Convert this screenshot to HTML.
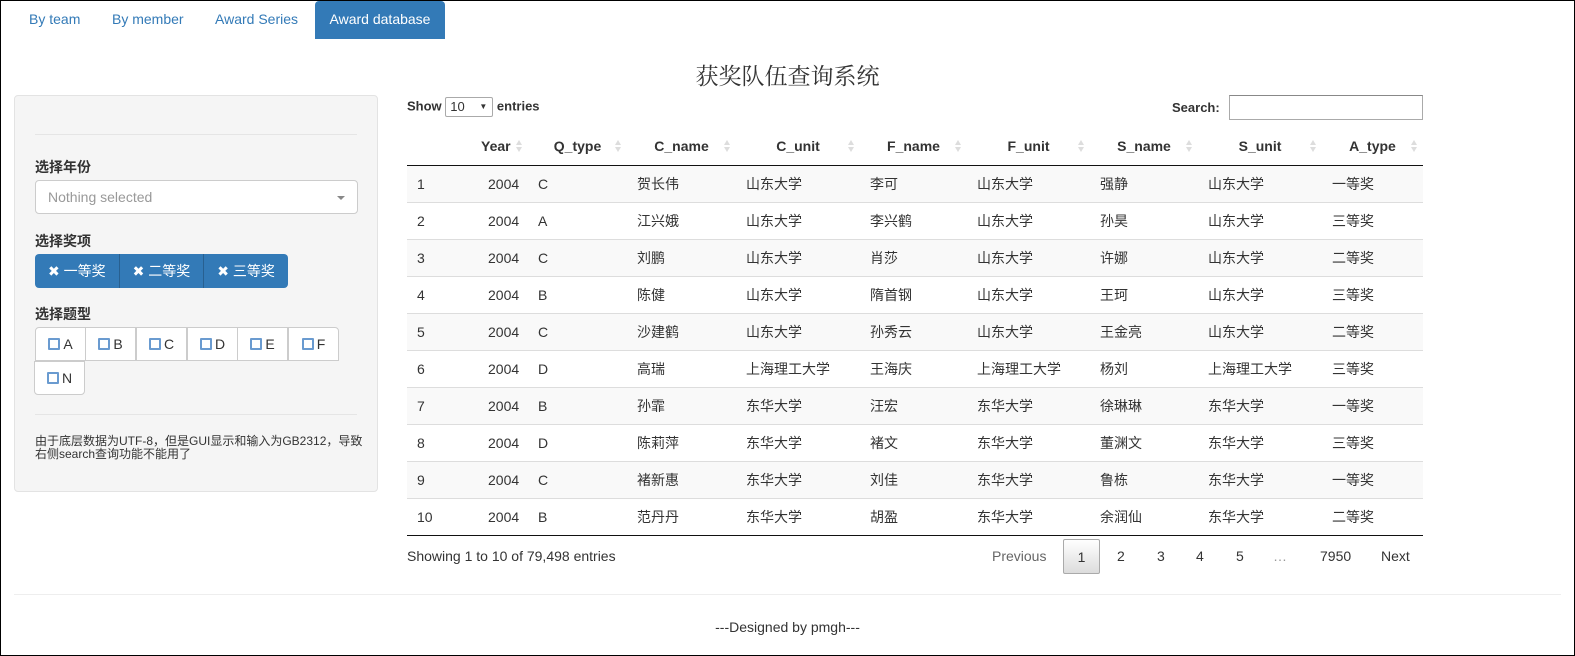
<!DOCTYPE html><html><head><meta charset="utf-8"><style>
*{box-sizing:border-box}
body{margin:0;width:1575px;height:656px;font-family:"Liberation Sans","Noto Sans CJK SC",sans-serif;font-size:14px;color:#333;background:#fff;overflow:hidden}
.frame{position:absolute;left:0;top:0;width:1575px;height:656px;border:1px solid #000}
.nav a{position:absolute;top:1px;height:38px;line-height:36px;color:#337ab7;text-decoration:none;font-size:14px;white-space:nowrap}
.nav .act{background:#337ab7;color:#fff;border-radius:4px 4px 0 0;left:315px;width:130px;text-align:center}
h2{position:absolute;top:58px;left:0;width:1575px;text-align:center;margin:0;font-weight:normal;font-size:23px;font-family:"Noto Serif CJK SC","Liberation Serif",serif;color:#333}
.side{position:absolute;left:14px;top:95px;width:364px;height:397px;background:#f5f5f5;border:1px solid #e3e3e3;border-radius:4px}
.hr{position:absolute;left:20px;right:20px;height:1px;background:#e5e5e5}
.lbl{position:absolute;left:20px;font-weight:bold;font-size:14px}
.sel{position:absolute;left:20px;top:84px;width:323px;height:34px;background:#fff;border:1px solid #ccc;border-radius:4px;color:#999;padding:0 12px;line-height:32px}
.sel:after{content:"";position:absolute;right:12px;top:15px;border:4px solid transparent;border-top-color:#888}
.btns{position:absolute;left:20px;top:158px;height:34px;display:flex}
.btns span{background:#337ab7;color:#fff;height:34px;line-height:34px;padding:0 13px;border-left:1px solid #286090;font-size:14px}
.btns span:first-child{border-radius:4px 0 0 4px;border-left:0}
.btns span:last-child{border-radius:0 4px 4px 0}
.cb{position:absolute;height:34px;width:51px;background:#fff;border:1px solid #ccc;text-align:center;line-height:32px;font-size:14px}
.cb i{display:inline-block;width:12px;height:12px;border:2px solid #6a9bd0;vertical-align:-1px;margin-right:3px;border-radius:1px}
.note{position:absolute;left:20px;top:339px;width:330px;font-size:12px;line-height:13px}
.top{position:absolute;font-weight:bold;font-size:13px}
table{position:absolute;left:407px;top:128px;width:1016px;border-collapse:collapse;table-layout:fixed}
th{height:37px;font-weight:bold;font-size:14px;text-align:center;border-bottom:1px solid #111;position:relative;padding:0}
th:after{content:"";position:absolute;right:6px;top:12px;width:0;height:0;border:3.5px solid transparent;border-bottom:5px solid #ddd;border-top:0}
th:before{content:"";position:absolute;right:6px;top:19px;width:0;height:0;border:3.5px solid transparent;border-top:5px solid #ddd;border-bottom:0}
th.n:after,th.n:before{display:none}
td{height:37px;padding:0 10px;border-top:1px solid #ddd;font-size:14px;white-space:nowrap}
tr:nth-child(odd) td{background:#f9f9f9}
tbody tr:last-child td{border-bottom:1px solid #111}
.pg span{position:absolute;top:539px;height:35px;line-height:35px;font-size:14px}
</style></head><body><div class="frame"></div>
<div class="nav"><a style="left:29px">By team</a><a style="left:112px">By member</a><a style="left:215px">Award Series</a><a class="act">Award database</a></div>
<h2>获奖队伍查询系统</h2>
<div class="side">
<div class="hr" style="top:38px"></div>
<div class="lbl" style="top:61px">选择年份</div>
<div class="sel">Nothing selected</div>
<div class="lbl" style="top:135px">选择奖项</div>
<div class="btns"><span>✖ 一等奖</span><span>✖ 二等奖</span><span>✖ 三等奖</span></div>
<div class="lbl" style="top:208px">选择题型</div>
<div class="cb" style="left:20px;top:231px;border-radius:4px 0 0 0"><i></i>A</div>
<div class="cb" style="left:70px;top:231px"><i></i>B</div>
<div class="cb" style="left:121px;top:231px"><i></i>C</div>
<div class="cb" style="left:172px;top:231px"><i></i>D</div>
<div class="cb" style="left:222px;top:231px"><i></i>E</div>
<div class="cb" style="left:273px;top:231px;border-radius:0 4px 0 0"><i></i>F</div>
<div class="cb" style="left:19px;top:265px;border-radius:0 0 4px 4px"><i></i>N</div>
<div class="hr" style="top:318px"></div>
<div class="note">由于底层数据为UTF-8，但是GUI显示和输入为GB2312，导致右侧search查询功能不能用了</div>
</div>
<div class="top" style="left:407px;top:97px">Show <span style="display:inline-block;width:48px;height:20px;border:1px solid #aaa;border-radius:2px;font-weight:normal;padding-left:4px;line-height:18px;vertical-align:middle;background:#fff;position:relative">10<span style="position:absolute;right:5px;font-size:8px">▼</span></span> entries</div>
<div class="top" style="left:1172px;top:100px">Search:</div>
<div style="position:absolute;left:1229px;top:95px;width:194px;height:25px;border:1px solid #aaa;border-top-color:#888"></div>
<table><colgroup><col style="width:71px"><col style="width:50px"><col style="width:99px"><col style="width:109px"><col style="width:124px"><col style="width:107px"><col style="width:123px"><col style="width:108px"><col style="width:124px"><col style="width:101px"></colgroup>
<thead><tr><th class="n"></th><th style="text-align:left;padding-left:3px">Year</th><th>Q_type</th><th>C_name</th><th>C_unit</th><th>F_name</th><th>F_unit</th><th>S_name</th><th>S_unit</th><th>A_type</th></tr></thead>
<tbody>
<tr><td>1</td><td>2004</td><td>C</td><td>贺长伟</td><td>山东大学</td><td>李可</td><td>山东大学</td><td>强静</td><td>山东大学</td><td>一等奖</td></tr>
<tr><td>2</td><td>2004</td><td>A</td><td>江兴娥</td><td>山东大学</td><td>李兴鹤</td><td>山东大学</td><td>孙昊</td><td>山东大学</td><td>三等奖</td></tr>
<tr><td>3</td><td>2004</td><td>C</td><td>刘鹏</td><td>山东大学</td><td>肖莎</td><td>山东大学</td><td>许娜</td><td>山东大学</td><td>二等奖</td></tr>
<tr><td>4</td><td>2004</td><td>B</td><td>陈健</td><td>山东大学</td><td>隋首钢</td><td>山东大学</td><td>王珂</td><td>山东大学</td><td>三等奖</td></tr>
<tr><td>5</td><td>2004</td><td>C</td><td>沙建鹤</td><td>山东大学</td><td>孙秀云</td><td>山东大学</td><td>王金亮</td><td>山东大学</td><td>二等奖</td></tr>
<tr><td>6</td><td>2004</td><td>D</td><td>高瑞</td><td>上海理工大学</td><td>王海庆</td><td>上海理工大学</td><td>杨刘</td><td>上海理工大学</td><td>三等奖</td></tr>
<tr><td>7</td><td>2004</td><td>B</td><td>孙霏</td><td>东华大学</td><td>汪宏</td><td>东华大学</td><td>徐琳琳</td><td>东华大学</td><td>一等奖</td></tr>
<tr><td>8</td><td>2004</td><td>D</td><td>陈莉萍</td><td>东华大学</td><td>褚文</td><td>东华大学</td><td>董渊文</td><td>东华大学</td><td>三等奖</td></tr>
<tr><td>9</td><td>2004</td><td>C</td><td>褚新惠</td><td>东华大学</td><td>刘佳</td><td>东华大学</td><td>鲁栋</td><td>东华大学</td><td>一等奖</td></tr>
<tr><td>10</td><td>2004</td><td>B</td><td>范丹丹</td><td>东华大学</td><td>胡盈</td><td>东华大学</td><td>余润仙</td><td>东华大学</td><td>二等奖</td></tr>
</tbody></table>
<div style="position:absolute;left:407px;top:548px;font-size:14px">Showing 1 to 10 of 79,498 entries</div>
<div class="pg"><span style="left:992px;color:#666">Previous</span>
<span style="left:1063px;width:37px;text-align:center;border:1px solid #aaa;border-radius:2px;background:linear-gradient(#fff,#dcdcdc)">1</span>
<span style="left:1117px">2</span><span style="left:1157px">3</span><span style="left:1196px">4</span><span style="left:1236px">5</span><span style="left:1273px;color:#999">…</span><span style="left:1320px">7950</span><span style="left:1381px">Next</span></div>
<div style="position:absolute;left:14px;right:14px;top:594px;height:1px;background:#eee"></div>
<div style="position:absolute;left:0;width:1575px;top:619px;text-align:center;font-size:14px">---Designed by pmgh---</div>
</body></html>
